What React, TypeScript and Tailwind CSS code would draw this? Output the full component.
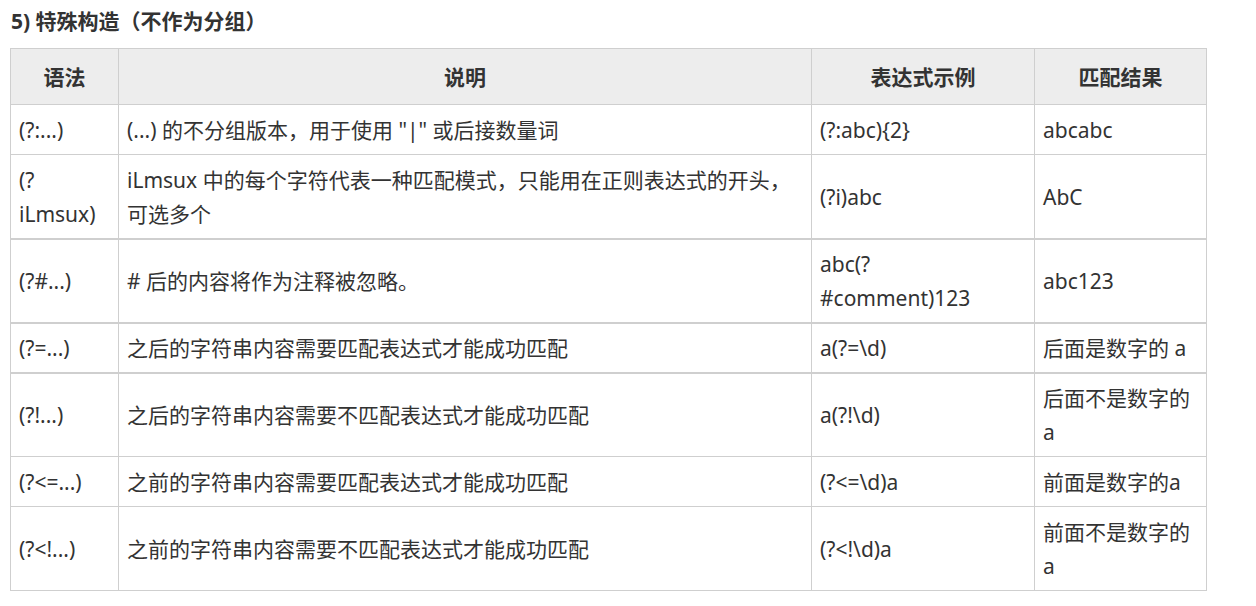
import React from "react";

type Row = { cells: React.ReactNode[]; thick?: boolean; afterThick?: boolean };

const rows: Row[] = [
  { cells: ["(?:...)", '(...) 的不分组版本，用于使用 "|" 或后接数量词', "(?:abc){2}", "abcabc"] },
  {
    cells: [
      <>(?<br />iLmsux)</>,
      <>iLmsux 中的每个字符代表一种匹配模式，只能用在正则表达式的开头，<br />可选多个</>,
      "(?i)abc",
      "AbC",
    ],
    thick: true,
  },
  {
    cells: ["(?#...)", "# 后的内容将作为注释被忽略。", <>abc(?<br />#comment)123</>, "abc123"],
    thick: true,
    afterThick: true,
  },
  {
    cells: ["(?=...)", "之后的字符串内容需要匹配表达式才能成功匹配", "a(?=\\d)", "后面是数字的 a"],
    thick: true,
    afterThick: true,
  },
  {
    cells: ["(?!...)", "之后的字符串内容需要不匹配表达式才能成功匹配", "a(?!\\d)", <>后面不是数字的<br />a</>],
    afterThick: true,
  },
  { cells: ["(?<=...)", "之前的字符串内容需要匹配表达式才能成功匹配", "(?<=\\d)a", "前面是数字的a"] },
  { cells: ["(?<!...)", "之前的字符串内容需要不匹配表达式才能成功匹配", "(?<!\\d)a", <>前面不是数字的<br />a</>] },
];

const headers = ["语法", "说明", "表达式示例", "匹配结果"];
const widths = ["w-[108px]", "w-[693px]", "w-[223px]", "w-[172px]"];

function cellClass(r: Row) {
  const base = "border border-[#cfcfcf] px-2 align-middle text-left font-normal";
  const b = r.thick ? " border-b-2 pb-[7px]" : " pb-[7.5px]";
  const t = r.afterThick ? " pt-[7px]" : " pt-[7.5px]";
  return base + b + t;
}

export default function App() {
  return (
    <div
      className="w-[1256px] h-[606px] bg-white text-[#333] overflow-hidden"
      style={{ fontFamily: '"Noto Sans", "Noto Sans CJK SC", sans-serif' }}
    >
      <div className="pl-[11px] pt-[4px] text-[21px] leading-[34px] font-bold text-[#333]">
        5) 特殊构造（不作为分组）
      </div>
      <table className="ml-[10px] mt-[10px] border-collapse table-fixed w-[1197px] text-[21px] leading-[34px]">
        <colgroup>
          {widths.map((w, i) => (
            <col key={i} className={w} />
          ))}
        </colgroup>
        <thead>
          <tr className="bg-[#ededed]">
            {headers.map((h, i) => (
              <th
                key={i}
                className="border border-[#cfcfcf] px-2 py-[10.5px] font-bold text-center align-middle"
              >
                {h}
              </th>
            ))}
          </tr>
        </thead>
        <tbody>
          {rows.map((r, ri) => (
            <tr key={ri}>
              {r.cells.map((c, ci) => (
                <td key={ci} className={cellClass(r)}>
                  {c}
                </td>
              ))}
            </tr>
          ))}
        </tbody>
      </table>
    </div>
  );
}
